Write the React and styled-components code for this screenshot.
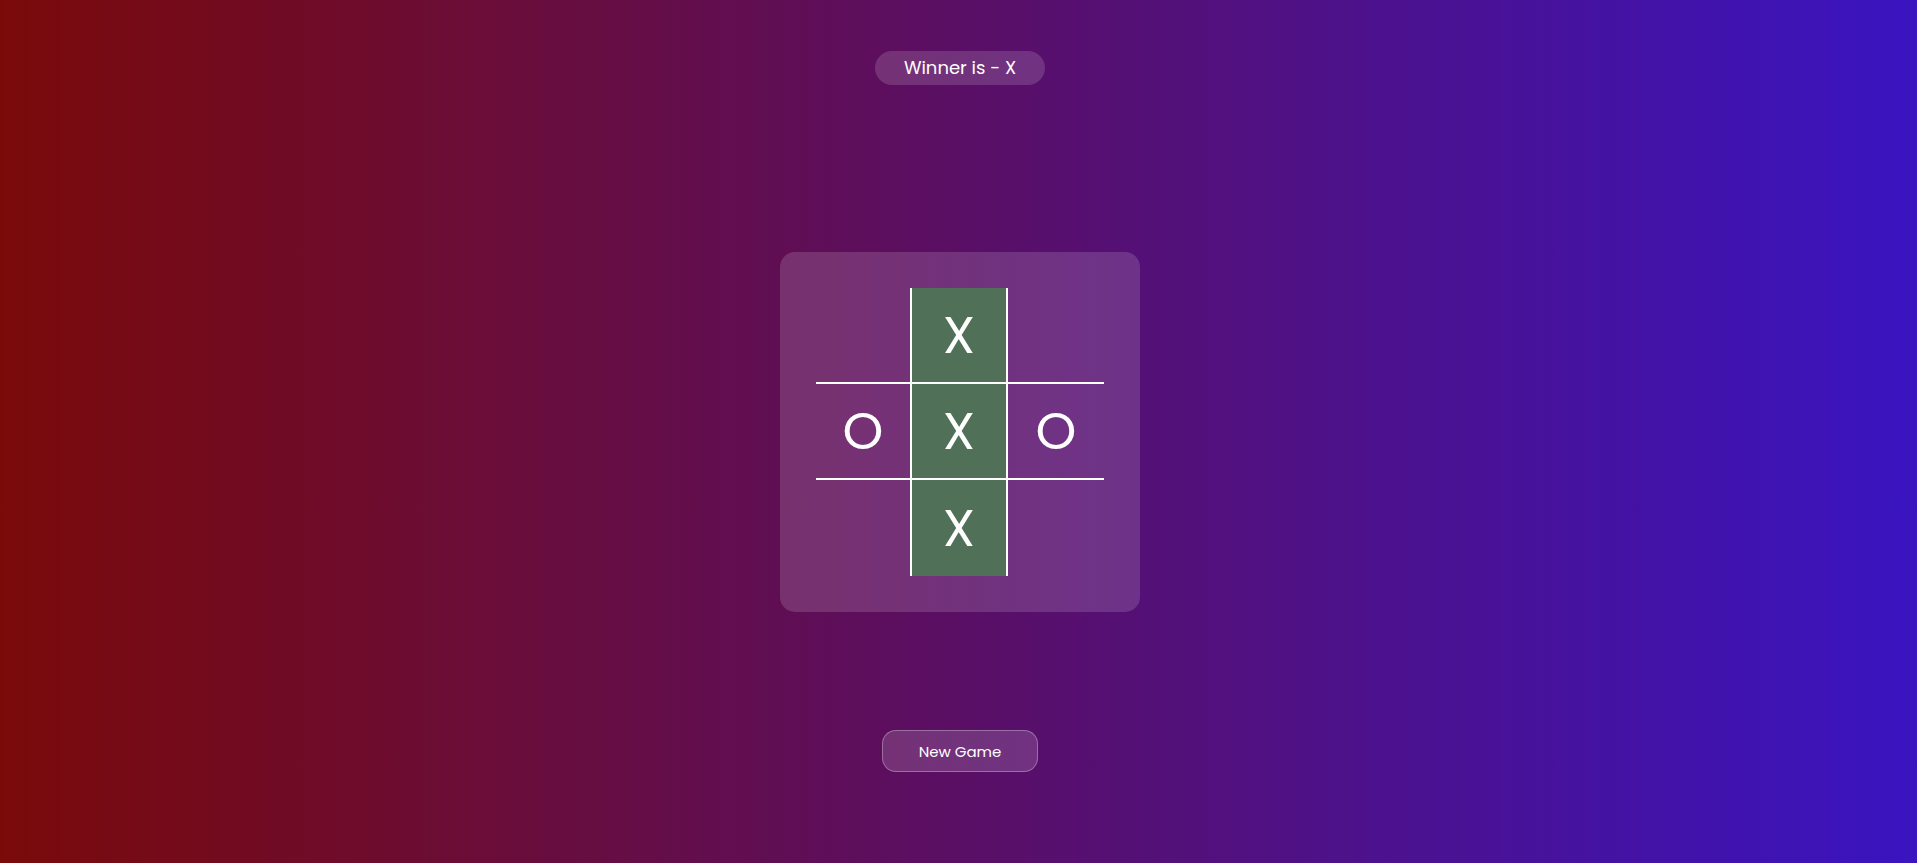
import React from 'react';
import styled, { createGlobalStyle } from 'styled-components';

const GlobalStyle = createGlobalStyle`
	* {
		box-sizing: border-box;
	}

	body {
		margin: 0;
		font-family: Poppins, 'Open Sans', 'Noto Sans', sans-serif;
		color: #fff;
	}
`;

const Page = styled.div`
	min-height: 100vh;
	background: linear-gradient(to right, #7a0a0a, #3a14c0);
	display: flex;
	flex-direction: column;
	align-items: center;
	padding-top: 51px;
	padding-left: 3px;
`;

const Status = styled.div`
	height: 34px;
	padding: 0 29px;
	border-radius: 17px;
	background-color: rgba(255, 255, 255, 0.15);
	display: flex;
	align-items: center;
	justify-content: center;
	font-size: 18px;
	line-height: 1;
`;

const Board = styled.div`
	margin-top: 167px;
	width: 360px;
	height: 360px;
	padding: 36px;
	border-radius: 15px;
	background-color: rgba(255, 255, 255, 0.15);
	display: grid;
	grid-template-columns: repeat(3, 96px);
	grid-template-rows: repeat(3, 96px);
`;

const Cell = styled.div`
	display: flex;
	align-items: center;
	justify-content: center;
	font-size: 52px;
	line-height: 1;
	background-color: ${(props) => (props.$win ? '#507058' : 'transparent')};
	border-right: ${(props) => (props.$col < 2 ? '2px solid #fff' : 'none')};
	border-bottom: ${(props) => (props.$row < 2 ? '2px solid #fff' : 'none')};
`;

const NewGame = styled.button`
	margin-top: 118px;
	width: 156px;
	height: 42px;
	border-radius: 14px;
	border: 1px solid rgba(255, 255, 255, 0.3);
	background-color: rgba(255, 255, 255, 0.15);
	color: #fff;
	font-family: inherit;
	font-size: 15px;
	cursor: pointer;
`;

const board = ['', 'X', '', 'O', 'X', 'O', '', 'X', ''];
const winLine = [1, 4, 7];

export default function App() {
	return (
		<>
			<GlobalStyle />
			<Page>
				<Status>Winner is - X</Status>

				<Board>
					{board.map((value, i) => (
						<Cell
							key={i}
							$row={Math.floor(i / 3)}
							$col={i % 3}
							$win={winLine.includes(i)}
						>
							{value}
						</Cell>
					))}
				</Board>

				<NewGame>New Game</NewGame>
			</Page>
		</>
	);
}
